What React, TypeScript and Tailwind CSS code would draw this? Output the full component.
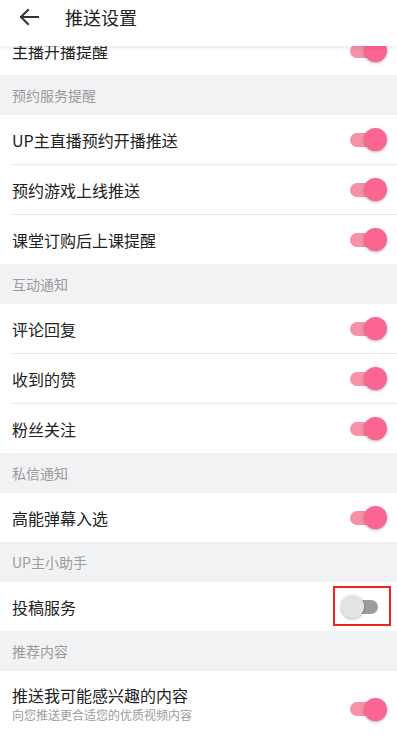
import React from "react";

type Row = { title: string; sub?: string; on: boolean; marked?: boolean };
type Section = { label?: string; rows: Row[] };

const sections: Section[] = [
  { rows: [{ title: "主播开播提醒", on: true }] },
  {
    label: "预约服务提醒",
    rows: [
      { title: "UP主直播预约开播推送", on: true },
      { title: "预约游戏上线推送", on: true },
      { title: "课堂订购后上课提醒", on: true },
    ],
  },
  {
    label: "互动通知",
    rows: [
      { title: "评论回复", on: true },
      { title: "收到的赞", on: true },
      { title: "粉丝关注", on: true },
    ],
  },
  { label: "私信通知", rows: [{ title: "高能弹幕入选", on: true }] },
  { label: "UP主小助手", rows: [{ title: "投稿服务", on: false, marked: true }] },
  {
    label: "推荐内容",
    rows: [{ title: "推送我可能感兴趣的内容", sub: "向您推送更合适您的优质视频内容", on: true }],
  },
];

const Toggle = ({ on }: { on: boolean }) => (
  <div className="relative w-[46px] h-[24px] flex items-center">
    <div className={`absolute left-[9px] w-[28px] h-[14px] rounded-full ${on ? "bg-[#f592a8]" : "bg-[#9d9d9d]"}`} />
    <div
      className={`absolute top-[0.5px] w-[23px] h-[23px] rounded-full shadow-[0_1px_3px_rgba(0,0,0,0.3)] ${
        on ? "left-[23px] bg-[#fb6592]" : "left-0 bg-[#e4e4e4]"
      }`}
    />
  </div>
);

export default function App() {
  return (
    <div className="relative w-[397px] h-[738px] overflow-hidden bg-white font-['Noto_Sans_CJK_SC','Noto_Sans',sans-serif] text-[#212121]">
      <div className="absolute top-0 left-0 right-0 z-10 h-[46px] bg-white shadow-[0_2px_4px_rgba(0,0,0,0.08)] flex items-start pt-[5px]">
        <svg width="24" height="24" viewBox="0 0 24 24" className="ml-[17px]" fill="none" stroke="#333" strokeWidth="2" strokeLinecap="square">
          <path d="M4 12h17M11 5l-7 7 7 7" />
        </svg>
        <span className="ml-[24px] mt-[3px] text-[18px] leading-[18px]">推送设置</span>
      </div>

      <div className="pt-[26px]">
        {sections.map((s, i) => (
          <div key={i}>
            {s.label ? (
              <div className="h-[40px] bg-[#f1f2f4] flex items-center px-[12px] text-[14px] text-[#9b9b9b]">{s.label}</div>
            ) : null}
            {s.rows.map((r, j) => (
              <div key={j} className="bg-white">
                <div className={`flex items-center pl-[12px] pr-[10px] ${r.sub ? "h-[66px]" : "h-[49px]"}`}>
                  <div className="flex-1 min-w-0">
                    <div className={`text-[16px] ${r.sub ? "leading-[20px]" : "leading-[22px]"}`}>{r.title}</div>
                    {r.sub ? <div className="mt-[1px] text-[12px] leading-[17px] text-[#9b9b9b]">{r.sub}</div> : null}
                  </div>
                  <div className={`relative ${r.sub ? "mt-[10px]" : ""}`}>
                    <Toggle on={r.on} />
                    {r.marked ? (
                      <div className="absolute -left-[8px] -top-[9px] w-[58px] h-[40px] border-2 border-[#f0241c]" />
                    ) : null}
                  </div>
                </div>
                {j < s.rows.length - 1 ? <div className="ml-[12px] h-px bg-[#e8e8e8]" /> : null}
              </div>
            ))}
          </div>
        ))}
      </div>
    </div>
  );
}
